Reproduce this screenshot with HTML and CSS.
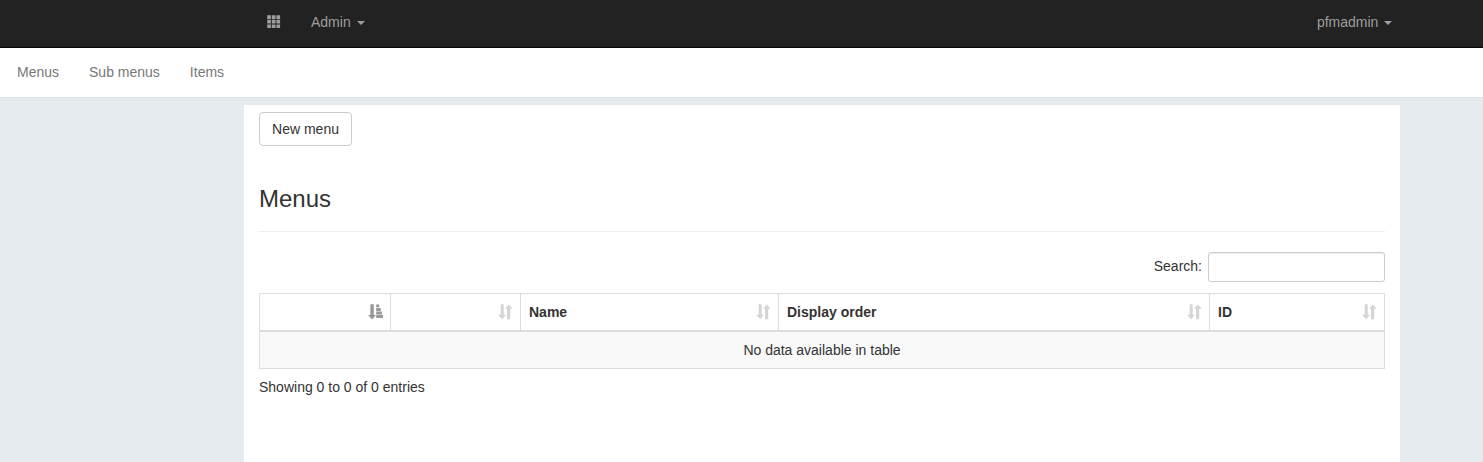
FILE: index.html
```html
<!DOCTYPE html>
<html lang="en">
<head>
<meta charset="utf-8">
<title>Menus</title>
<link rel="stylesheet" href="styles.css">
</head>
<body>
<svg class="defs" width="0" height="0" aria-hidden="true">
  <symbol id="sort" viewBox="0 0 15 16"><path d="M2.7.3h3v10.5h2.3L4.2 15.2.2 10.8h2.5zM9 15.2h3.2V4.8h2.5L10.8.4 7 4.8h2z"/></symbol>
  <symbol id="sort-asc" viewBox="0 0 15 16"><path d="M2.4.3h3.4v10.6H8l-3.9 4.5L.1 10.9h2.3zM8.2.4h3v2.9h-3zM8.2 3.9h4.5v3H8.2zM8.2 7.5h5.7v3H8.2zM8.2 11.1H15v3H8.2z"/></symbol>
</svg>
<nav class="navbar">
  <div class="navbar-left">
    <a class="nav-link"><svg class="grid-icon" width="14" height="14" viewBox="0 0 14 14"><path d="M.2.2h3.7v3.7H.2zM4.8.2h3.7v3.7H4.8zM9.4.2h3.7v3.7H9.4zM.2 4.8h3.7v3.7H.2zM4.8 4.8h3.7v3.7H4.8zM9.4 4.8h3.7v3.7H9.4zM.2 9.4h3.7v3.7H.2zM4.8 9.4h3.7v3.7H4.8zM9.4 9.4h3.7v3.7H9.4z"/></svg></a>
    <a class="nav-link">Admin <b class="caret"></b></a>
  </div>
  <a class="nav-link">pfmadmin <b class="caret"></b></a>
</nav>
<nav class="subnav"><a>Menus</a><a>Sub menus</a><a>Items</a></nav>
<main class="content">
  <button class="btn">New menu</button>
  <h3 class="title">Menus</h3>
  <div class="filter"><label for="search">Search:</label><input id="search" class="search" type="search"></div>
  <table class="table">
    <colgroup><col class="c-first"><col class="c-second"><col class="c-name"><col class="c-order"><col class="c-id"></colgroup>
    <thead><tr>
      <th><div class="head"><span></span><svg class="sort active"><use href="#sort-asc"/></svg></div></th>
      <th><div class="head"><span></span><svg class="sort"><use href="#sort"/></svg></div></th>
      <th><div class="head"><span>Name</span><svg class="sort"><use href="#sort"/></svg></div></th>
      <th><div class="head"><span>Display order</span><svg class="sort"><use href="#sort"/></svg></div></th>
      <th><div class="head"><span>ID</span><svg class="sort"><use href="#sort"/></svg></div></th>
    </tr></thead>
    <tbody><tr><td colspan="5">No data available in table</td></tr></tbody>
  </table>
  <div class="info">Showing 0 to 0 of 0 entries</div>
</main>
</body>
</html>
```

FILE: styles.css
```css
* { box-sizing: border-box; }
body {
  margin: 0;
  height: 462px;
  overflow: hidden;
  background: #e6ebef;
  color: #333;
  font: 14px/20px "Liberation Sans", Arial, sans-serif;
}
.defs { display: block; height: 0; }
.navbar {
  display: flex;
  justify-content: space-between;
  height: 48px;
  padding: 0 90.6px 0 252px;
  background: #222;
  border-bottom: 1px solid #080808;
}
.navbar-left { display: flex; }
.nav-link {
  display: flex;
  align-items: center;
  height: 44px;
  color: #9d9d9d;
}
.navbar-left .nav-link { padding: 0 15px; }
.grid-icon { fill: currentColor; }
.caret {
  margin-left: 6px;
  margin-top: 2px;
  border-top: 4px solid;
  border-left: 4px solid transparent;
  border-right: 4px solid transparent;
}
.subnav {
  display: flex;
  gap: 30px;
  height: 50px;
  padding: 14px 17px;
  background: #fff;
  border-bottom: 1px solid #dfe3e6;
  color: #777;
}
.content {
  width: 1156px;
  height: 357px;
  margin: 7px 0 0 244px;
  padding: 7px 15px 0;
  background: #fff;
}
.btn {
  display: block;
  width: 93px;
  height: 34px;
  padding: 0;
  background: #fff;
  border: 1px solid #ccc;
  border-radius: 4px;
  color: #333;
  font: inherit;
}
.title {
  margin: 40px 0 20px;
  padding-bottom: 19px;
  border-bottom: 1px solid #eee;
  font-size: 24px;
  font-weight: 400;
  line-height: 26px;
}
.filter {
  display: flex;
  justify-content: flex-end;
  gap: 6px;
  height: 30px;
}
.filter label { padding-top: 4px; }
.search {
  width: 177px;
  height: 30px;
  margin: 0;
  padding: 5px 10px;
  background: #fff;
  border: 1px solid #ccc;
  border-radius: 3px;
  box-shadow: inset 0 1px 1px rgba(0, 0, 0, .075);
}
.table {
  width: 1126px;
  margin: 11px 0 8px;
  table-layout: fixed;
  border-collapse: separate;
  border-spacing: 0;
  border: solid #ddd;
  border-width: 1px 0 0 1px;
}
.c-first { width: 131px; }
.c-second { width: 130px; }
.c-name { width: 258px; }
.c-order { width: 431px; }
.c-id { width: 175px; }
.table th {
  height: 38px;
  padding: 0 7px 0 8px;
  border-right: 1px solid #ddd;
  border-bottom: 2px solid #ddd;
}
.head {
  display: flex;
  align-items: center;
  justify-content: space-between;
}
.sort {
  width: 15px;
  height: 16px;
  fill: #333;
  opacity: .2;
}
.sort.active { opacity: .5; }
.table td {
  height: 37px;
  padding: 0;
  background: #f9f9f9;
  border-right: 1px solid #ddd;
  border-bottom: 1px solid #ddd;
  text-align: center;
}
```
